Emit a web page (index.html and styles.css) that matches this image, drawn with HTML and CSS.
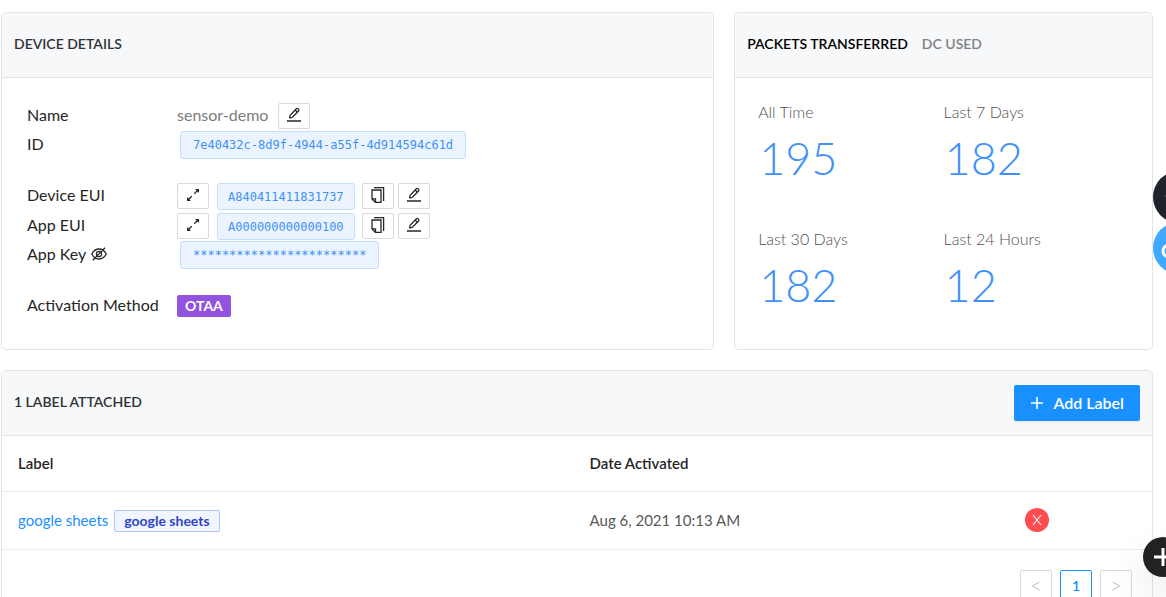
FILE: index.html
```html
<!DOCTYPE html>
<html lang="en">
<head>
<meta charset="utf-8">
<title>Device details</title>
<link rel="stylesheet" href="styles.css">
</head>
<body>
<svg class="sprite" aria-hidden="true">
  <symbol id="edit" viewBox="0 0 16 16"><path d="M3.5 11.2 4.2 8.2 10.4 1.8Q11.2 1 12 1.8L12.6 2.4Q13.4 3.2 12.6 4L6.4 10.3 3.5 11.2M9.2 3.1 11.4 5.3" fill="none" stroke="currentColor" stroke-width="1.3"/><path d="M1 14h14" stroke="currentColor" stroke-width="1.5"/></symbol>
  <symbol id="copy" viewBox="0 0 16 16"><path d="M4 .7h9.6v13.4" fill="none" stroke="currentColor" stroke-width="1.3"/><path d="M2 3h9v12.4H5.4L2 12zM2 11.8h3.5v3.5" fill="none" stroke="currentColor" stroke-width="1.3"/></symbol>
  <symbol id="expand" viewBox="0 0 16 16"><path d="M9.3 6.7 13 3M6.7 9.3 3 13" stroke="currentColor" stroke-width="1.3"/><path d="M10 2h4v4zM2 10v4h4z" fill="currentColor"/></symbol>
</svg>
<main class="page">
  <div class="top">
    <section class="card">
      <header class="card-head"><h2 class="title">DEVICE DETAILS</h2></header>
      <dl class="details">
        <div class="row"><dt>Name</dt><dd><span class="name">sensor-demo</span><button class="tool" aria-label="Edit name"><svg><use href="#edit"/></svg></button></dd></div>
        <div class="row short"><dt>ID</dt><dd><code class="code wide">7e40432c-8d9f-4944-a55f-4d914594c61d</code></dd></div>
        <div class="row spaced"><dt>Device EUI</dt><dd><button class="tool" aria-label="Expand device EUI"><svg><use href="#expand"/></svg></button><code class="code">A840411411831737</code><button class="tool" aria-label="Copy device EUI"><svg><use href="#copy"/></svg></button><button class="tool next" aria-label="Edit device EUI"><svg><use href="#edit"/></svg></button></dd></div>
        <div class="row"><dt>App EUI</dt><dd><button class="tool" aria-label="Expand app EUI"><svg><use href="#expand"/></svg></button><code class="code">A000000000000100</code><button class="tool" aria-label="Copy app EUI"><svg><use href="#copy"/></svg></button><button class="tool next" aria-label="Edit app EUI"><svg><use href="#edit"/></svg></button></dd></div>
        <div class="row short"><dt>App Key <button class="eye" aria-label="Show app key"><svg viewBox="0 0 16 16"><path d="M.8 8Q3.4 3 8 3T15.2 8Q12.6 13 8 13T.8 8zM1.8 14.2 14 1.8" fill="none" stroke="currentColor" stroke-width="1.3"/><circle cx="8" cy="8" r="2.6" fill="none" stroke="currentColor" stroke-width="1.2"/></svg></button></dt><dd><code class="code wide">************************</code></dd></div>
        <div class="row spaced"><dt>Activation Method</dt><dd><span class="tag">OTAA</span></dd></div>
      </dl>
    </section>
    <section class="card">
      <header class="card-head tabs"><button class="tab active">PACKETS TRANSFERRED</button><button class="tab">DC USED</button></header>
      <dl class="stats">
        <div><dt>All Time</dt><dd>195</dd></div>
        <div><dt>Last 7 Days</dt><dd>182</dd></div>
        <div><dt>Last 30 Days</dt><dd>182</dd></div>
        <div><dt>Last 24 Hours</dt><dd>12</dd></div>
      </dl>
    </section>
  </div>
  <section class="card">
    <header class="card-head"><h2 class="title">1 LABEL ATTACHED</h2><button class="add"><svg viewBox="0 0 14 14"><path d="M7 1v12M1 7h12" stroke="currentColor" stroke-width="1.6"/></svg>Add Label</button></header>
    <table class="labels">
      <thead><tr><th class="col-label">Label</th><th class="col-date">Date Activated</th><th></th></tr></thead>
      <tbody><tr><td><a href="#labels">google sheets</a><span class="chip">google sheets</span></td><td>Aug 6, 2021 10:13 AM</td><td><button class="remove" aria-label="Remove label"><svg viewBox="0 0 12 12"><path d="M2 1 10 11M10 1 2 11" stroke="currentColor" stroke-width="1.1"/></svg></button></td></tr></tbody>
    </table>
    <nav class="pager" aria-label="Pages">
      <button class="page-btn" aria-label="Previous page"><svg viewBox="0 0 12 12"><path d="M9.5 2 2.5 6l7 4" fill="none" stroke="currentColor"/></svg></button>
      <button class="page-btn current">1</button>
      <button class="page-btn" aria-label="Next page"><svg viewBox="0 0 12 12"><path d="M2.5 2l7 4-7 4" fill="none" stroke="currentColor"/></svg></button>
    </nav>
  </section>
</main>
<button class="float dark" aria-label="Menu"><svg viewBox="0 0 52 52"><path d="M12 25h4" stroke="#777" stroke-width="1"/></svg></button>
<button class="float blue" aria-label="Chat"><svg viewBox="0 0 52 52"><circle cx="16" cy="29" r="6" fill="none" stroke="#fff" stroke-width="3"/></svg></button>
<button class="float plus" aria-label="Add"><svg viewBox="0 0 40 40"><path d="M20 11v18M11 20h18" stroke="#fff" stroke-width="3"/></svg></button>
</body>
</html>
```
FILE: styles.css
```css
* { box-sizing: border-box; }
body { margin: 0; height: 100vh; overflow: hidden; background: #fff; color: #262626; font: 15px/24px Lato, "Open Sans", sans-serif; }
button { margin: 0; padding: 0; border: 0; background: none; color: inherit; font: inherit; cursor: pointer; }
svg { display: block; }
dl, dd, h2 { margin: 0; }
.sprite { display: none; }
.page { display: flex; flex-direction: column; gap: 20px; padding: 12px 13px 0 1px; }
.top { display: grid; grid-template-columns: 63fr 37fr; gap: 20px; }
.card { border: 1px solid #e1e4e8; border-radius: 5px; background: #fff; overflow: hidden; }
.card-head { display: flex; align-items: center; justify-content: space-between; height: 65px; padding: 0 12px; background: #f6f8fa; border-bottom: 1px solid #e1e4e8; }
.card-head.tabs { justify-content: flex-start; gap: 14px; }
.title, .tab { padding-bottom: 2px; font-size: 14px; font-weight: 600; }
.title { color: #303236; }
.tab { color: #808184; }
.tab.active { color: #000; }

.details { padding: 23px 25px 28px; }
.row { display: grid; grid-template-columns: 150px 1fr; align-items: center; height: 30px; font-size: 16px; }
.row.short { height: 28px; }
.row.spaced { margin-top: 22px; }
.row dt { display: flex; align-items: center; gap: 5px; padding-bottom: 2px; }
.row dd { display: flex; align-items: center; }
.name { margin-right: 10px; padding-bottom: 2px; color: #7c7c7c; }
.tool { display: grid; place-items: center; width: 32px; height: 26px; padding-bottom: 2px; border: 1px solid #d9d9d9; border-radius: 2px; background: #fff; }
.tool svg { width: 16px; height: 16px; }
.tool.next { margin-left: 4px; }
.code { height: 27px; margin: 0 7px 0 8px; padding: 0 10px; border: 1px solid #c6defd; border-radius: 3px; background: #ebf4fe; color: #4091f7; font: 12px/26px "DejaVu Sans Mono", monospace; }
.code.wide { height: 28px; margin: 0 3px; padding: 0 12px; }
.eye svg { width: 16px; height: 16px; }
.tag { padding: 0 8px; border-radius: 2px; background: #9254de; color: #fff; font-size: 14px; line-height: 22px; font-weight: 700; }

.stats { display: grid; grid-template-columns: 1fr 1fr; row-gap: 41px; padding: 22px 23px; }
.stats dt { color: #505050; font-size: 16px; font-weight: 300; }
.stats dd { margin-top: 6px; padding-left: 1px; color: #4091f7; font-size: 45px; line-height: 56px; font-weight: 300; }

.add { display: flex; align-items: center; gap: 9px; height: 36px; padding: 0 16px; border-radius: 2px; background: #1890ff; box-shadow: 0 2px 0 #0000000b; color: #fff; font-size: 16px; font-weight: 600; }
.add svg { width: 14px; height: 14px; }
.labels { width: 100%; border-collapse: collapse; table-layout: fixed; }
.labels th, .labels td { padding: 0 16px 1px; border-bottom: 1px solid #ebebeb; text-align: left; }
.labels th { height: 55px; font-size: 15px; font-weight: 600; }
.labels td { height: 58px; color: #595959; }
.col-label { width: 49.7%; }
.col-date { width: 37.9%; }
.labels a { color: #1890ff; text-decoration: none; }
.chip { display: inline-block; margin-left: 6px; padding: 0 9px; border: 1px solid #adc6ff; border-radius: 2px; background: #f0f5ff; color: #2f45c5; font-size: 14px; line-height: 20px; font-weight: 700; }
.remove { display: grid; place-items: center; width: 24px; height: 24px; border-radius: 50%; background: #ff4d4f; color: #fff; }
.remove svg { width: 12px; height: 12px; }
.pager { display: flex; justify-content: flex-end; gap: 8px; padding: 20px 20px 16px; }
.page-btn { display: grid; place-items: center; width: 32px; height: 32px; border: 1px solid #d9d9d9; border-radius: 2px; background: #fff; color: #bfbfbf; font-size: 14px; }
.page-btn svg { width: 12px; height: 12px; }
.page-btn.current { border-color: #1890ff; color: #1890ff; font-weight: 600; }

.float { position: fixed; right: -39px; width: 52px; height: 52px; border-radius: 50%; }
.float.dark { top: 171px; background: #20242a; }
.float.blue { top: 222px; background: #40a9ff; }
.float.plus { top: 537px; right: -17px; width: 40px; height: 40px; background: #222; box-shadow: 0 20px 40px #00000018; }
```
